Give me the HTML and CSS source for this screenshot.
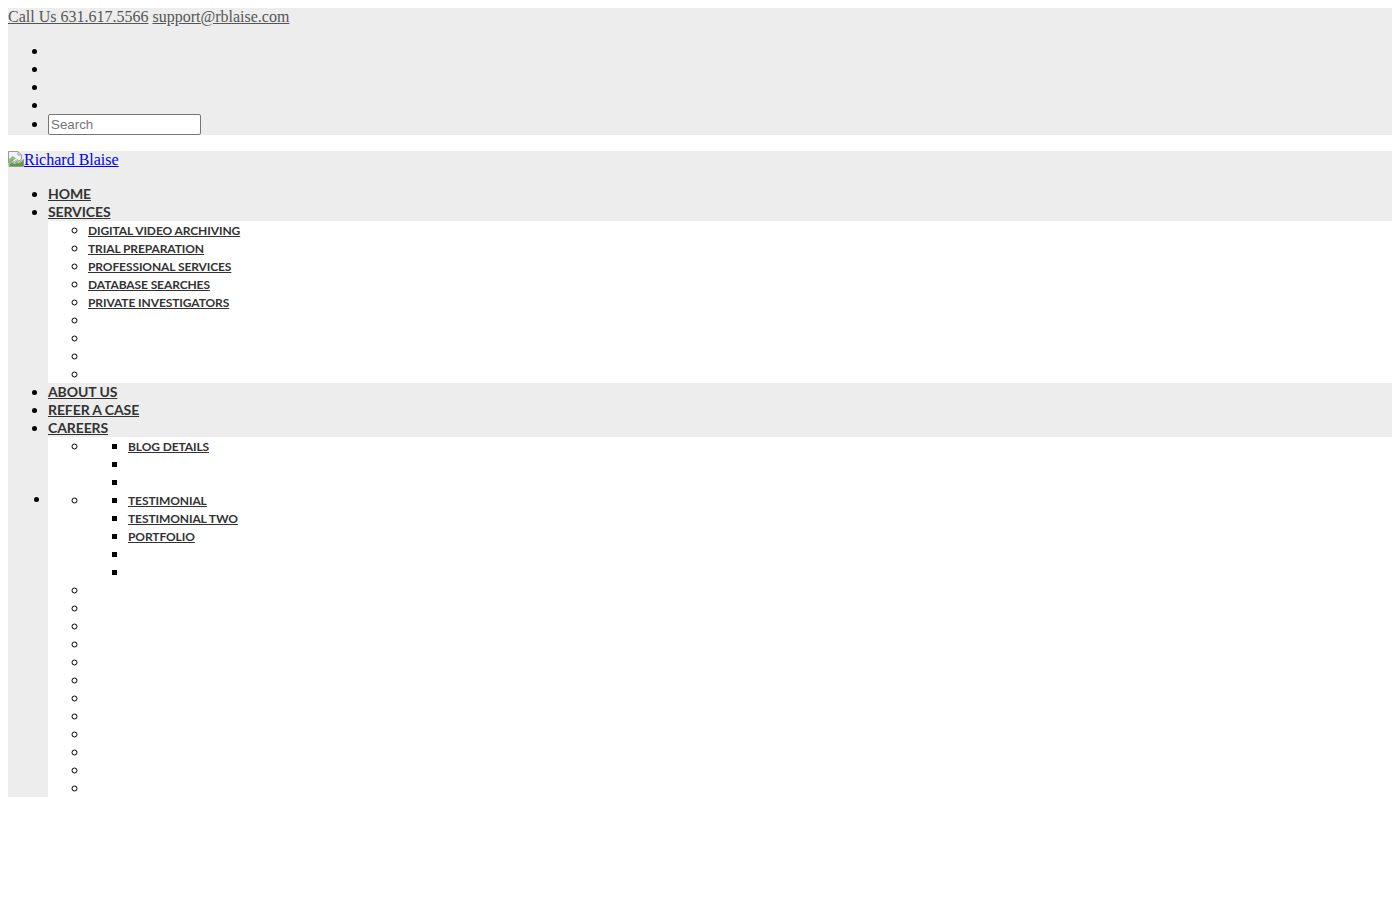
FILE: index.html
```html
<!DOCTYPE html>
<html lang="en">
<head>
<meta charset="utf-8">
<title>Richard Blaise</title>
<link rel="stylesheet" href="styles.css">
</head>
<body>
<div class="topbar">
  <a class="top-link" href="#">Call Us 631.617.5566</a> <a class="top-link" href="#">support@rblaise.com</a>
  <ul class="social">
    <li></li>
    <li></li>
    <li></li>
    <li></li>
    <li><input class="search" type="text" placeholder="Search"></li>
  </ul>
</div>
<div class="header">
  <div class="logo"><a class="logo-link" href="#"><svg class="broken" width="16" height="16" viewBox="0 0 16 16"><path d="M0.5 0.5 H10 L13.5 4 V8 L11 10 L9 8.5 L6.5 11 L4 9 L0.5 12 Z" fill="#eef3f8" stroke="#9a9a9a" stroke-width="1"/><path d="M1 15.5 V13 L4 10.5 L6.5 12.5 L9 10 L11 11.5 L15.5 8.5 V15.5 Z" fill="#eef3f8" stroke="#9a9a9a" stroke-width="1"/><path d="M1.5 15 L1.5 13.3 L4 11.3 L6.5 13.3 L9 11 L11 12.4 L15 9.6 V15 Z" fill="#5a9e3c"/><path d="M1 8 L5 5 L8 7.5 L1 12 Z" fill="#6fb146" opacity="0.8"/><path d="M10 0.5 V4 H13.5" fill="none" stroke="#9a9a9a"/></svg>Richard Blaise</a></div>
  <ul class="menu">
    <li><a href="#">HOME</a></li>
    <li><a href="#">SERVICES</a>
      <ul class="sub">
        <li><a href="#">DIGITAL VIDEO ARCHIVING</a></li>
        <li><a href="#">TRIAL PREPARATION</a></li>
        <li><a href="#">PROFESSIONAL SERVICES</a></li>
        <li><a href="#">DATABASE SEARCHES</a></li>
        <li><a href="#">PRIVATE INVESTIGATORS</a></li>
        <li></li>
        <li></li>
        <li></li>
        <li></li>
      </ul>
    </li>
    <li><a href="#">ABOUT US</a></li>
    <li><a href="#">REFER A CASE</a></li>
    <li><a href="#">CAREERS</a></li>
    <li class="mega">
      <ul class="sub">
        <li>
          <ul class="sub3">
            <li><a href="#">BLOG DETAILS</a></li>
            <li></li>
            <li></li>
          </ul>
        </li>
        <li>
          <ul class="sub3">
            <li><a href="#">TESTIMONIAL</a></li>
            <li><a href="#">TESTIMONIAL TWO</a></li>
            <li><a href="#">PORTFOLIO</a></li>
            <li></li>
            <li></li>
          </ul>
        </li>
        <li></li>
        <li></li>
        <li></li>
        <li></li>
        <li></li>
        <li></li>
        <li></li>
        <li></li>
        <li></li>
        <li></li>
        <li></li>
        <li></li>
      </ul>
    </li>
  </ul>
</div>
</body>
</html>
```
FILE: styles.css
```css
body {
  margin: 8px;
  font-family: "Liberation Serif", "Times New Roman", serif;
  font-size: 16px;
  line-height: 18px;
  color: #000;
  background: #fff;
}

.topbar {
  background: #ededed;
}

.top-link {
  color: #555;
}

.social {
  margin: 16px 0;
  padding-left: 40px;
}

.search {
  font-family: "Liberation Sans", Arial, sans-serif;
  font-size: 13.33px;
  width: 153px;
  height: 21px;
  box-sizing: border-box;
  padding: 1px 2px;
  border: 1px solid #767676;
  border-radius: 2px;
  margin: 0;
  background: #fff;
  color: #000;
}

.search::placeholder {
  color: #757575;
}

.header {
  background: #ededed;
}

.logo-link {
  color: #0000ee;
}

.broken {
  vertical-align: -2px;
}

.menu {
  margin: 16px 0;
  padding-left: 40px;
}

.menu a {
  font-family: Lato, "Open Sans", sans-serif;
  font-weight: 700;
  color: #333;
  font-size: 14px;
  line-height: 14px;
  letter-spacing: -0.1px;
}

.sub {
  background: #fff;
  padding-left: 40px;
  margin: 0;
  list-style: circle;
}

.sub a {
  font-size: 12px;
  line-height: 12px;
}

.sub3 {
  padding-left: 40px;
  margin: 0;
  list-style: square;
}

.mega {
  list-style: none;
  position: relative;
}

.mega::before {
  content: "";
  position: absolute;
  left: -14px;
  top: 60px;
  width: 5px;
  height: 5px;
  border-radius: 50%;
  background: #000;
}
```
